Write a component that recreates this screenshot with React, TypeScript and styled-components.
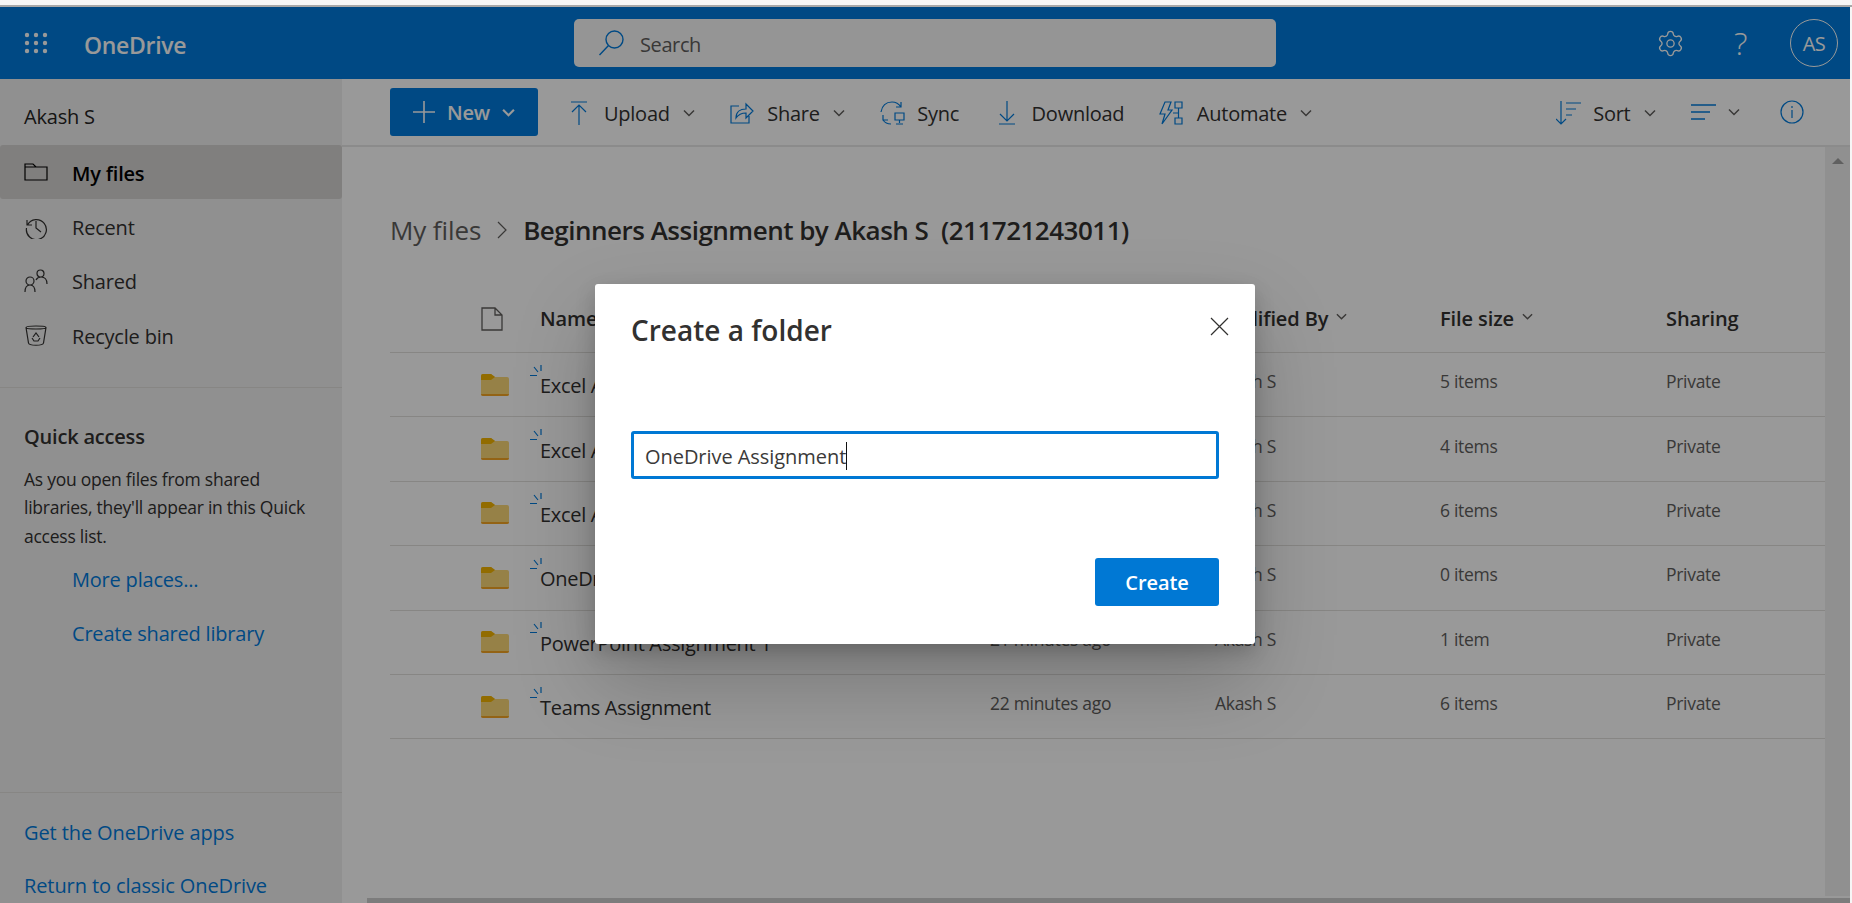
import { Settings } from "lucide-react";
import styled, { createGlobalStyle } from "styled-components";

const FONT = `"Open Sans", "Noto Sans", "Liberation Sans", sans-serif`;
const BLUE = "#007bdc";

const files = [
  { name: "Excel Assignment 1", modified: "19 minutes ago", size: "5 items" },
  { name: "Excel Assignment 2", modified: "19 minutes ago", size: "4 items" },
  { name: "Excel Assignment 3", modified: "20 minutes ago", size: "6 items" },
  { name: "OneDrive Assignment", modified: "20 minutes ago", size: "0 items" },
  { name: "PowerPoint Assignment 1", modified: "21 minutes ago", size: "1 item" },
  { name: "Teams Assignment", modified: "22 minutes ago", size: "6 items" },
];

function Chevron({ size = 12, weight = 1.5 }: { size?: number; weight?: number }) {
  return (
    <svg width={size} height={size} viewBox="0 0 12 12" fill="none" stroke="currentColor" strokeWidth={weight}>
      <path d="M1 3.500 6 8.500l5-5" />
    </svg>
  );
}

function Waffle() {
  const dots = [];
  for (let r = 0; r < 3; r++) {
    for (let c = 0; c < 3; c++) {
      dots.push(<circle key={`${r}-${c}`} cx={3 + c * 9} cy={3 + r * 8} r="2.2" />);
    }
  }
  return (
    <svg width="24" height="22" viewBox="0 0 24 22" fill="currentColor">
      {dots}
    </svg>
  );
}

function Line({ w, h, d, sw = 1.2 }: { w: number; h: number; d: string; sw?: number }) {
  return (
    <svg width={w} height={h} viewBox={`0 0 ${w} ${h}`} fill="none" stroke="currentColor" strokeWidth={sw}>
      <path d={d} />
    </svg>
  );
}

export default function App() {
  return (
    <>
      <Global />
      <TopStrip />
      <Frame>
        <Header>
          <Waffle />
          <Brand>OneDrive</Brand>
          <SearchBox>
            <Line w={26} h={26} d="M25 9.500a8.500 8.500 0 1 1-17 0 8.500 8.500 0 0 1 17 0ZM10.500 15.500 1.500 25" sw={1.4} />
            <SearchLabel>Search</SearchLabel>
          </SearchBox>
          <HeaderRight>
            <GearSlot><Settings size={29} strokeWidth={1.1} /></GearSlot>
            <Help>?</Help>
            <Avatar>AS</Avatar>
          </HeaderRight>
        </Header>
        <Body>
          <Sidebar>
            <UserName>Akash S</UserName>
            <NavItem $active>
              <Line w={24} h={20} d="M1 2h8l3 3h11v13H1ZM1 5h11" />
              <NavLabel>My files</NavLabel>
            </NavItem>
            <NavItem>
              <Line w={24} h={24} d="M3 5v5h5M3.500 10a10 10 0 1 1-1 3M12 6v7l5 4" />
              <NavLabel>Recent</NavLabel>
            </NavItem>
            <NavItem>
              <Line w={24} h={24} d="M1 23c0-5 2-7 5-7s5 2 5 7M6 16a4 4 0 1 0 0-8 4 4 0 0 0 0 8ZM12 11c1-2 3-3 5-3 3 0 6 2 6 7M16.500 8a3.500 3.500 0 1 0 0-7 3.500 3.500 0 0 0 0 7Z" />
              <NavLabel>Shared</NavLabel>
            </NavItem>
            <NavItem>
              <Line w={24} h={24} d="M2 4.500C2 2.500 22 2.500 22 4.500S2 6.500 2 4.500ZM2 4.500 4.500 20c.5 3 14.500 3 15 0L22 4.500M9 14l3-4 3 4M8 15l2 3h4l2-3" />
              <NavLabel>Recycle bin</NavLabel>
            </NavItem>
            <SideDivider />
            <QuickTitle>Quick access</QuickTitle>
            <QuickText>
              As you open files from shared libraries, they'll appear in this Quick access list.
            </QuickText>
            <IndentLink>More places...</IndentLink>
            <IndentLink>Create shared library</IndentLink>
            <SideFooter>
              <FooterLink>Get the OneDrive apps</FooterLink>
              <FooterLink>Return to classic OneDrive</FooterLink>
            </SideFooter>
          </Sidebar>
          <Main>
            <CommandBar>
              <NewButton>
                <Line w={22} h={22} d="M11 0v22M0 11h22" sw={1.6} />
                <span>New</span>
                <Chevron size={13} weight={2} />
              </NewButton>
              <Command>
                <CmdIcon><Line w={16} h={24} d="M0 1h16M8 24V5M1 11l7-7 7 7" /></CmdIcon>
                Upload
                <ChevSlot><Chevron /></ChevSlot>
              </Command>
              <Command>
                <CmdIcon><Line w={24} h={22} d="M9 4H1v17h18v-7M6 16c0-6 4-9 10-9V2l7 7-7 7v-5c-5 0-8 2-10 5Z" /></CmdIcon>
                Share
                <ChevSlot><Chevron /></ChevSlot>
              </Command>
              <Command>
                <CmdIcon><Line w={25} h={24} d="M1 11C2 5 6 1 12 1c4 0 7 2 9 5M21 1v5h-5M3 14v5h5M3 19c2 3 5 4 8 4M15 12h9v7h-9ZM19.500 19v3M16 23h7" /></CmdIcon>
                Sync
              </Command>
              <Command>
                <CmdIcon><Line w={16} h={24} d="M8 0v19M1 13l7 7 7-7M0 23h16" /></CmdIcon>
                Download
              </Command>
              <Command>
                <CmdIcon><Line w={25} h={24} d="M6 1h6l-3 8h4L3 23l3-10H1ZM16 1h7v6h-7ZM16 17h7v6h-7ZM19.500 7v10M14 12h5" /></CmdIcon>
                Automate
                <ChevSlot><Chevron /></ChevSlot>
              </Command>
              <CommandRight>
                <Command>
                  <CmdIcon><Line w={25} h={24} d="M5 0v23M0 18l5 5 5-5M10 2h15M10 8h10M10 14h6" /></CmdIcon>
                  Sort
                  <ChevSlot><Chevron /></ChevSlot>
                </Command>
                <ViewSlot>
                  <CmdIcon><Line w={25} h={16} d="M0 1h25M0 8h19M0 15h14" sw={1.4} /></CmdIcon>
                  <ViewChev><Chevron /></ViewChev>
                </ViewSlot>
                <InfoSlot>
                  <Line w={24} h={24} d="M23 12a11 11 0 1 1-22 0 11 11 0 0 1 22 0ZM12 10v8M12 6v2" />
                </InfoSlot>
              </CommandRight>
            </CommandBar>
            <Content>
              <ListArea>
                <Breadcrumb>
                  <CrumbParent>My files</CrumbParent>
                  <CrumbSep><Line w={10} h={18} d="M1 1l8 8-8 8" /></CrumbSep>
                  <CrumbCurrent>Beginners Assignment by Akash S&nbsp; (211721243011)</CrumbCurrent>
                </Breadcrumb>
                <HeadRow>
                  <IconCell $head><Line w={22} h={24} d="M1 1h13l7 7v15H1ZM14 1v7h7" sw={1.3} /></IconCell>
                  <HeadCell>Name</HeadCell>
                  <HeadCell>Modified</HeadCell>
                  <HeadCell>Modified By <HeadChev><Chevron size={11} /></HeadChev></HeadCell>
                  <HeadCell>File size <HeadChev><Chevron size={11} /></HeadChev></HeadCell>
                  <HeadCell>Sharing</HeadCell>
                </HeadRow>
                {files.map((f) => (
                  <FileRow key={f.name}>
                    <IconCell>
                      <svg width="28" height="22" viewBox="0 0 28 22">
                        <path d="M0 2a2 2 0 0 1 2-2h8l4 3h12a2 2 0 0 1 2 2v15a2 2 0 0 1-2 2H2a2 2 0 0 1-2-2Z" fill="#fbd777" />
                        <path d="M0 2a2 2 0 0 1 2-2h8l4 3-4 3H0Z" fill="#f3b400" />
                        <path d="M0 20h28a2 2 0 0 1-2 2H2a2 2 0 0 1-2-2Z" fill="#f5a623" />
                      </svg>
                      <BusyMark>
                        <Line w={12} h={12} d="M11 0v6M4 2l4 5M0 10.500h7" sw={1.2} />
                      </BusyMark>
                    </IconCell>
                    <NameCell>{f.name}</NameCell>
                    <MetaCell>{f.modified}</MetaCell>
                    <MetaCell>Akash S</MetaCell>
                    <MetaCell>{f.size}</MetaCell>
                    <MetaCell>Private</MetaCell>
                  </FileRow>
                ))}
              </ListArea>
              <ScrollTrack>
                <ScrollArrow />
              </ScrollTrack>
            </Content>
            <BottomBar />
          </Main>
        </Body>
        <Overlay>
          <Dialog>
            <DialogHead>
              <DialogTitle>Create a folder</DialogTitle>
              <CloseButton><Line w={19} h={19} d="M1 1l17 17M18 1 1 18" sw={1.2} /></CloseButton>
            </DialogHead>
            <FolderField>
              OneDrive Assignment
              <Caret />
            </FolderField>
            <DialogFoot>
              <CreateButton>Create</CreateButton>
            </DialogFoot>
          </Dialog>
        </Overlay>
      </Frame>
    </>
  );
}

const Global = createGlobalStyle`
  html, body {
    margin: 0;
    height: 100%;
    overflow: hidden;
    background: #f6f6f6;
    font-family: ${FONT};
  }
  * { box-sizing: border-box; }
`;

const TopStrip = styled.div`
  height: 7px;
  background: #f6f6f6;
  border-bottom: 2px solid #a8a8a8;
`;

const Frame = styled.div`
  position: relative;
  width: 1850px;
  height: 896px;
  display: flex;
  flex-direction: column;
  overflow: hidden;
  background: #fff;
`;

const Header = styled.header`
  height: 72px;
  flex: none;
  display: flex;
  align-items: center;
  padding-left: 24px;
  background: ${BLUE};
  color: #fff;
`;

const Brand = styled.div`
  margin-left: 36px;
  width: 490px;
  padding-top: 3px;
  font-size: 23px;
  font-weight: 600;
  letter-spacing: -0.3px;
`;

const SearchBox = styled.div`
  width: 702px;
  height: 48px;
  display: flex;
  align-items: center;
  padding-left: 24px;
  gap: 16px;
  border-radius: 5px;
  background: #f8f8f8;
  color: ${BLUE};
`;

const SearchLabel = styled.span`
  padding-top: 2px;
  color: #605e5c;
  font-size: 20px;
  letter-spacing: -0.4px;
`;

const HeaderRight = styled.div`
  margin-left: auto;
  display: flex;
  align-items: center;
  padding-right: 12px;
`;

const GearSlot = styled.div`
  display: flex;
  margin-right: 49px;
`;

const Help = styled.div`
  width: 18px;
  font-size: 32px;
  font-weight: 300;
  line-height: 1;
  margin-right: 38px;
`;

const Avatar = styled.div`
  width: 48px;
  height: 48px;
  border: 1px solid #fff;
  border-radius: 50%;
  display: flex;
  align-items: center;
  justify-content: center;
  font-size: 20px;
  letter-spacing: -0.5px;
`;

const Body = styled.div`
  flex: 1;
  min-height: 0;
  display: flex;
`;

const Sidebar = styled.aside`
  width: 342px;
  flex: none;
  display: flex;
  flex-direction: column;
  background: #f0f0f0;
  color: #323130;
  font-size: 20px;
  letter-spacing: -0.2px;
  overflow: hidden;

  > * {
    flex-shrink: 0;
  }
`;

const UserName = styled.div`
  height: 66px;
  padding: 9px 0 0 24px;
  display: flex;
  align-items: center;
  color: #252423;
`;

const NavItem = styled.div<{ $active?: boolean }>`
  height: 54.4px;
  display: flex;
  align-items: center;
  gap: 24px;
  padding-left: 24px;
  border-radius: 3px;
  background: ${(p) => (p.$active ? "#d6d4d2" : "transparent")};
  font-weight: ${(p) => (p.$active ? 600 : 400)};
  color: ${(p) => (p.$active ? "#000" : "#323130")};
`;

const NavLabel = styled.span`
  margin-top: 2px;
`;

const SideDivider = styled.div`
  margin-top: 24px;
  height: 1px;
  background: #e1dfdd;
`;

const QuickTitle = styled.div`
  margin-top: 35px;
  padding-left: 24px;
  font-weight: 600;
  line-height: 27px;
`;

const QuickText = styled.div`
  margin-top: 15px;
  padding: 0 24px;
  font-size: 17.5px;
  line-height: 28.5px;
  letter-spacing: -0.25px;
`;

const IndentLink = styled.div`
  height: 54.4px;
  padding: 4px 0 0 72px;
  display: flex;
  align-items: center;
  color: ${BLUE};
`;

const SideFooter = styled.div`
  margin-top: 133px;
  border-top: 1px solid #e1dfdd;
  padding: 13px 24px 0;
`;

const FooterLink = styled.div`
  height: 53px;
  display: flex;
  align-items: center;
  color: ${BLUE};
  white-space: nowrap;
  letter-spacing: -0.1px;
`;

const Main = styled.main`
  flex: 1;
  min-width: 0;
  display: flex;
  flex-direction: column;
`;

const CommandBar = styled.div`
  height: 68px;
  flex: none;
  display: flex;
  align-items: center;
  padding: 0 46px 0 48px;
  border-bottom: 2px solid #e8e8e8;
  color: #323130;
  font-size: 20px;
  letter-spacing: -0.25px;
`;

const NewButton = styled.div`
  width: 148px;
  height: 48px;
  margin-right: 28px;
  display: flex;
  align-items: center;
  gap: 12px;
  padding-left: 23px;
  border-radius: 3px;
  background: ${BLUE};
  color: #fff;
  font-weight: 600;
`;

const Command = styled.div`
  display: flex;
  align-items: center;
  margin-right: 34.5px;
  padding-top: 2px;
`;

const CmdIcon = styled.span`
  width: 26px;
  display: flex;
  justify-content: center;
  margin-right: 12px;
  color: ${BLUE};
`;

const ChevSlot = styled.span`
  display: inline-flex;
  margin-left: 13px;
  color: #605e5c;
`;

const ViewChev = styled.span`
  display: inline-flex;
  color: #605e5c;
`;

const HeadChev = styled.span`
  display: inline-flex;
  margin: -4px 0 0 8px;
  color: #605e5c;
`;

const CommandRight = styled.div`
  margin-left: auto;
  display: flex;
  align-items: center;
`;

const ViewSlot = styled.div`
  display: flex;
  align-items: center;
  margin-right: 40px;
`;

const InfoSlot = styled.div`
  display: flex;
  color: ${BLUE};
`;

const Content = styled.div`
  flex: 1;
  min-height: 0;
  display: flex;
`;

const ListArea = styled.div`
  flex: 1;
  min-width: 0;
  padding-left: 48px;
`;

const Breadcrumb = styled.div`
  height: 84px;
  margin-top: 54px;
  display: flex;
  align-items: center;
  padding-bottom: 26px;
`;

const CrumbParent = styled.span`
  color: #605e5c;
  font-size: 26px;
  letter-spacing: -0.1px;
`;

const CrumbSep = styled.span`
  display: flex;
  margin: 0 16px;
  color: #605e5c;
`;

const CrumbCurrent = styled.span`
  color: #323130;
  font-size: 26px;
  font-weight: 600;
  letter-spacing: -0.5px;
`;

const rowGrid = `
  display: grid;
  grid-template-columns: 150px 450px 225px 225px 226px 1fr;
  align-items: center;
  border-bottom: 1px solid #e1dfdd;
`;

const HeadRow = styled.div`
  ${rowGrid}
  height: 68px;
`;

const FileRow = styled.div`
  ${rowGrid}
  height: 64.4px;
`;

const IconCell = styled.div<{ $head?: boolean }>`
  position: relative;
  display: flex;
  justify-content: flex-end;
  padding-right: ${(p) => (p.$head ? 37 : 31)}px;
  color: #605e5c;
`;

const BusyMark = styled.span`
  position: absolute;
  left: 140px;
  top: -9px;
  display: flex;
  color: ${BLUE};
`;

const HeadCell = styled.div`
  display: flex;
  align-items: center;
  color: #323130;
  font-size: 20px;
  font-weight: 600;
  letter-spacing: -0.1px;
  white-space: nowrap;
`;

const NameCell = styled.div`
  color: #323130;
  font-size: 20px;
  letter-spacing: -0.3px;
  padding-top: 2px;
`;

const MetaCell = styled.div`
  color: #605e5c;
  font-size: 17.5px;
  letter-spacing: -0.3px;
  white-space: nowrap;
  padding-bottom: 7px;
`;

const ScrollTrack = styled.div`
  width: 25px;
  flex: none;
  background: #f0f0f0;
  display: flex;
  justify-content: center;
  padding-top: 11px;
`;

const ScrollArrow = styled.div`
  width: 0;
  height: 0;
  border-left: 6px solid transparent;
  border-right: 6px solid transparent;
  border-bottom: 6px solid #a0a0a0;
`;

const BottomBar = styled.div`
  height: 7px;
  flex: none;
  margin-left: 25px;
  border-top: 2px solid #fff;
  background: #cfcfcf;
`;

const Overlay = styled.div`
  position: absolute;
  inset: 0;
  display: flex;
  align-items: center;
  justify-content: center;
  padding-top: 18px;
  background: rgba(0, 0, 0, 0.4);
`;

const Dialog = styled.div`
  position: relative;
  width: 660px;
  height: 360px;
  display: flex;
  flex-direction: column;
  padding: 0 36px;
  border-radius: 3px;
  background: #fff;
  box-shadow: 0 37px 82px rgba(0, 0, 0, 0.22), 0 7px 20px rgba(0, 0, 0, 0.18);
`;

const DialogHead = styled.div`
  height: 92px;
  flex: none;
  display: flex;
  align-items: center;
`;

const DialogTitle = styled.h2`
  margin: 0;
  color: #323130;
  font-size: 28px;
  font-weight: 600;
  letter-spacing: 0;
`;

const CloseButton = styled.div`
  position: absolute;
  top: 33px;
  right: 26px;
  display: flex;
  color: #323130;
`;

const FolderField = styled.div`
  height: 48px;
  margin-top: 55px;
  display: flex;
  align-items: center;
  padding: 2px 0 0 11px;
  border: 3px solid #0078d4;
  border-radius: 3px;
  color: #3b3a39;
  font-size: 20px;
  letter-spacing: -0.05px;
`;

const Caret = styled.span`
  width: 1px;
  height: 28px;
  background: #111;
`;

const DialogFoot = styled.div`
  margin-top: 79px;
  display: flex;
  justify-content: flex-end;
`;

const CreateButton = styled.div`
  width: 124px;
  height: 48px;
  display: flex;
  align-items: center;
  justify-content: center;
  border-radius: 3px;
  background: #0078d4;
  color: #fff;
  font-size: 20px;
  font-weight: 600;
  letter-spacing: -0.1px;
`;
